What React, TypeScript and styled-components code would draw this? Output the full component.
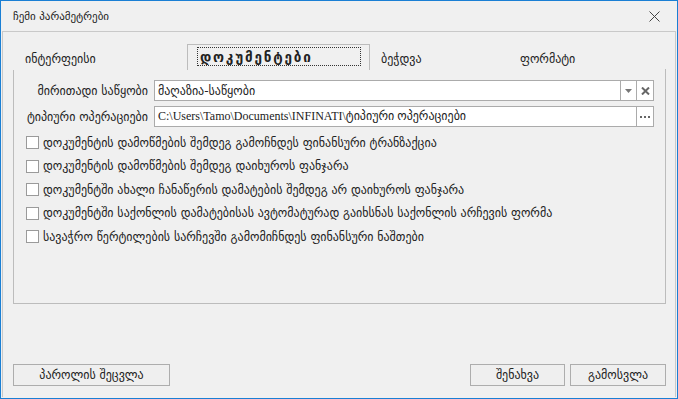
import React from "react";
import styled, { createGlobalStyle } from "styled-components";

const GlobalStyle = createGlobalStyle`
  html, body {
    margin: 0;
    padding: 0;
    background: #f0f0f0;
  }
  body {
    font-family: "DejaVu Sans", sans-serif;
    color: #222;
  }
`;

export const Window = styled.div`
  width: 678px;
  height: 399px;
  box-sizing: border-box;
  border: 1px solid #1a7fd4;
  background: #f0f0f0;
  display: flex;
  flex-direction: column;
`;

export const TitleBar = styled.div`
  height: 30px;
  flex: none;
  display: flex;
  align-items: center;
  justify-content: space-between;
  padding: 0 17px 0 12px;
`;

export const Title = styled.span`
  font-size: 11px;
  color: #222;
`;

export const CloseIcon = styled.svg`
  width: 11px;
  height: 11px;
  display: block;
`;

export const Body = styled.div`
  flex: 1;
  margin: 0 1px 1px 1px;
  border: 1px solid #c9c9c9;
  border-bottom: none;
  padding: 13px 9px 11px 10px;
  display: flex;
  flex-direction: column;
`;

export const TabStrip = styled.div`
  display: flex;
  align-items: flex-end;
  height: 25px;
  margin-bottom: -1px;
  position: relative;
  z-index: 1;
`;

export const Tab = styled.div<{ $width: number; $active?: boolean; $pad?: number }>`
  box-sizing: border-box;
  width: ${(p) => p.$width}px;
  height: ${(p) => (p.$active ? 26 : 23)}px;
  padding-left: ${(p) => (p.$active ? 9 : p.$pad ?? 12)}px;
  display: flex;
  align-items: ${(p) => (p.$active ? "flex-start" : "center")};
  font-size: 12px;
  color: #222;
  background: #f0f0f0;
  border: ${(p) => (p.$active ? "1px solid #bcbcbc" : "none")};
  border-bottom: none;
`;

export const FocusRing = styled.span`
  box-sizing: border-box;
  margin-top: 2px;
  width: 164px;
  height: 19px;
  border: 1px dotted #333;
  padding-left: 2px;
  display: flex;
  align-items: center;
  font-weight: bold;
  font-size: 13.5px;
  letter-spacing: 1.8px;
`;

export const Panel = styled.div`
  box-sizing: border-box;
  height: 235px;
  border: 1px solid #bcbcbc;
  padding: 10px 11px 0 11px;
`;

export const FieldGrid = styled.div`
  display: grid;
  grid-template-columns: 123px 1fr;
  column-gap: 6px;
  row-gap: 5px;
  align-items: center;
`;

export const FieldLabel = styled.span`
  text-align: right;
  font-size: 12px;
  white-space: nowrap;
`;

export const InputBox = styled.div`
  box-sizing: border-box;
  height: 21px;
  border: 1px solid #ababab;
  background: #fff;
  display: flex;
  align-items: stretch;
`;

export const InputText = styled.span<{ $serif?: boolean }>`
  flex: 1;
  padding-left: 3px;
  display: flex;
  align-items: center;
  font-size: 12px;
  font-family: ${(p) =>
    p.$serif ? '"Liberation Serif", "DejaVu Sans", serif' : '"DejaVu Sans", sans-serif'};
  white-space: nowrap;
  overflow: hidden;
`;

export const SideButton = styled.span<{ $width: number }>`
  width: ${(p) => p.$width}px;
  border-left: 1px solid #ababab;
  display: flex;
  align-items: center;
  justify-content: center;
  background: #fff;
`;

export const CheckList = styled.div`
  margin-top: 4px;
  display: flex;
  flex-direction: column;
`;

export const CheckRow = styled.label`
  height: 23.5px;
  display: flex;
  align-items: center;
  gap: 4px;
  padding-left: 1px;
  font-size: 12px;
  white-space: nowrap;
`;

export const CheckBox = styled.span`
  box-sizing: border-box;
  width: 13px;
  height: 13px;
  border: 1px solid #9a9a9a;
  background: #fff;
  flex: none;
`;

export const Footer = styled.div`
  margin-top: auto;
  display: flex;
  gap: 5px;
`;

export const Button = styled.button<{ $width: number }>`
  box-sizing: border-box;
  width: ${(p) => p.$width}px;
  height: 22px;
  border: 1px solid #adadad;
  background: #efefef;
  font-family: "DejaVu Sans", sans-serif;
  font-size: 12px;
  color: #222;
  padding: 0;
`;

export const FooterSpacer = styled.div`
  flex: 1;
`;

const options = [
  "დოკუმენტის დამოწმების შემდეგ გამოჩნდეს ფინანსური ტრანზაქცია",
  "დოკუმენტის დამოწმების შემდეგ დაიხუროს ფანჯარა",
  "დოკუმენტში ახალი ჩანაწერის დამატების შემდეგ არ დაიხუროს ფანჯარა",
  "დოკუმენტში საქონლის დამატებისას ავტომატურად გაიხსნას საქონლის არჩევის ფორმა",
  "სავაჭრო წერტილების სარჩევში გამომიჩნდეს ფინანსური ნაშთები",
];

const App = () => {
  return (
    <>
      <GlobalStyle />
      <Window>
        <TitleBar>
          <Title>ჩემი პარამეტრები</Title>
          <CloseIcon viewBox="0 0 11 11">
            <path d="M0.5 0.5 L10.5 10.5 M10.5 0.5 L0.5 10.5" stroke="#444" strokeWidth="1" />
          </CloseIcon>
        </TitleBar>

        <Body>
          <TabStrip>
            <Tab $width={174}>ინტერფეისი</Tab>
            <Tab $width={183} $active>
              <FocusRing>დოკუმენტები</FocusRing>
            </Tab>
            <Tab $width={138} $pad={11}>ბეჭდვა</Tab>
            <Tab $width={157}>ფორმატი</Tab>
          </TabStrip>

          <Panel>
            <FieldGrid>
              <FieldLabel>მირითადი საწყობი</FieldLabel>
              <InputBox>
                <InputText>მაღაზია-საწყობი</InputText>
                <SideButton $width={15}>
                  <svg width="7" height="4" viewBox="0 0 7 4">
                    <path d="M0 0 H7 L3.5 4 Z" fill="#777" />
                  </svg>
                </SideButton>
                <SideButton $width={16}>
                  <svg width="9" height="8" viewBox="0 0 9 8">
                    <path d="M1 0.5 L8 7.5 M8 0.5 L1 7.5" stroke="#666" strokeWidth="2" />
                  </svg>
                </SideButton>
              </InputBox>

              <FieldLabel>ტიპიური ოპერაციები</FieldLabel>
              <InputBox>
                <InputText $serif>C:\Users\Tamo\Documents\INFINATI\ტიპიური ოპერაციები</InputText>
                <SideButton $width={16}>
                  <svg width="10" height="2" viewBox="0 0 10 2">
                    <rect x="0" y="0" width="2" height="2" fill="#666" />
                    <rect x="4" y="0" width="2" height="2" fill="#666" />
                    <rect x="8" y="0" width="2" height="2" fill="#666" />
                  </svg>
                </SideButton>
              </InputBox>
            </FieldGrid>

            <CheckList>
              {options.map((text) => (
                <CheckRow key={text}>
                  <CheckBox />
                  {text}
                </CheckRow>
              ))}
            </CheckList>
          </Panel>

          <Footer>
            <Button $width={157}>პაროლის შეცვლა</Button>
            <FooterSpacer />
            <Button $width={95}>შენახვა</Button>
            <Button $width={96}>გამოსვლა</Button>
          </Footer>
        </Body>
      </Window>
    </>
  );
};

export default App;
